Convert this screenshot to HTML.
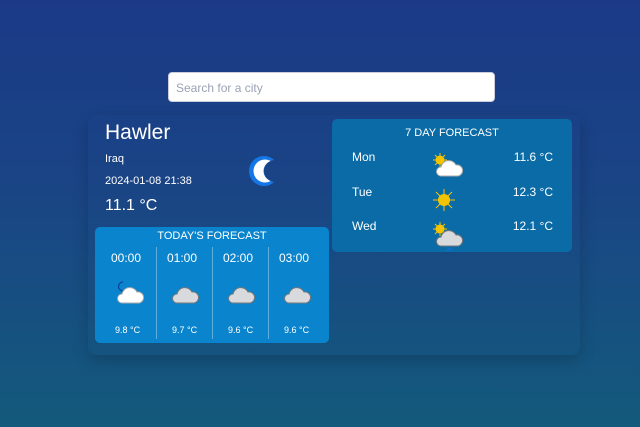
<!DOCTYPE html>
<html><head><meta charset="utf-8"><style>
*{margin:0;padding:0;box-sizing:border-box}
body{width:640px;height:427px;overflow:hidden;background:linear-gradient(180deg,#1b3987 0%,#1a4585 45%,#135a7c 100%);font-family:"Liberation Sans",sans-serif;color:#fff;position:relative}
.search{position:absolute;left:168px;top:72px;width:327px;height:30px;background:#fff;border-radius:4px;border:1px solid #ccd;font-size:12px;color:#9aa3b5;padding:8px 7px}
.card{position:absolute;left:88px;top:115px;width:492px;height:240px;border-radius:8px;box-shadow:0 6px 16px rgba(0,0,0,.18)}
.abs{position:absolute}
.today{position:absolute;left:95px;top:227px;width:234px;height:116px;background:#0a84cc;border-radius:5px}
.week{position:absolute;left:332px;top:119px;width:240px;height:133px;background:#0a6ba6;border-radius:5px}
.col{position:absolute;top:20px;width:1px;height:92px;background:rgba(255,255,255,.35)}
.t{font-size:12px}
</style></head><body>
<div class="search">Search for a city</div>
<div class="card"></div>
<div class="abs" style="left:105px;top:121px;font-size:21px">Hawler</div>
<div class="abs" style="left:105px;top:153px;font-size:11px">Iraq</div>
<div class="abs" style="left:105px;top:175px;font-size:11px">2024-01-08 21:38</div>
<div class="abs" style="left:105px;top:197px;font-size:16px">11.1 °C</div>
<svg class="abs" style="left:248px;top:154px" width="32" height="36" viewBox="0 0 32 36">
<defs><mask id="m"><rect width="32" height="36" fill="#fff"/><circle cx="27" cy="17" r="11" fill="#000"/></mask>
<mask id="m2"><rect width="32" height="36" fill="#fff"/><circle cx="26" cy="17" r="10.5" fill="#000"/></mask></defs>
<circle cx="16" cy="17" r="15" fill="#1577e6" mask="url(#m)"/>
<circle cx="17" cy="17" r="11.5" fill="#fff" mask="url(#m2)"/>
</svg>
<div class="today">
<div class="abs" style="left:0;width:234px;text-align:center;top:3px;font-size:11px">TODAY'S FORECAST</div>
<div class="col" style="left:61px"></div><div class="col" style="left:117px"></div><div class="col" style="left:173px"></div>
<div class="abs t" style="left:16px;top:24px">00:00</div>
<div class="abs t" style="left:72px;top:24px">01:00</div>
<div class="abs t" style="left:128px;top:24px">02:00</div>
<div class="abs t" style="left:184px;top:24px">03:00</div>
<svg class="abs" style="left:20px;top:54px" width="32" height="24"><path d="M8 1 A4.5 4.5 0 1 0 8 10 A3.5 3.5 0 0 1 8 1Z" fill="#fff" stroke="#0a3fa0" stroke-width="1.2"/><path d="M7 22 a4.5 4.5 0 0 1 0-9 a8 8 0 0 1 15-2 a5.5 5.5 0 0 1 2 11Z" fill="#fff" stroke="#aaa"/></svg>
<svg class="abs" style="left:76px;top:56px" width="32" height="22"><path d="M6 20 a4.5 4.5 0 0 1 0-9 a8 8 0 0 1 15-2 a5.5 5.5 0 0 1 2 11Z" fill="#d8dadd" stroke="#777"/></svg>
<svg class="abs" style="left:132px;top:56px" width="32" height="22"><path d="M6 20 a4.5 4.5 0 0 1 0-9 a8 8 0 0 1 15-2 a5.5 5.5 0 0 1 2 11Z" fill="#d8dadd" stroke="#777"/></svg>
<svg class="abs" style="left:188px;top:56px" width="32" height="22"><path d="M6 20 a4.5 4.5 0 0 1 0-9 a8 8 0 0 1 15-2 a5.5 5.5 0 0 1 2 11Z" fill="#d8dadd" stroke="#777"/></svg>
<div class="abs" style="left:20px;top:98px;font-size:9px">9.8 °C</div>
<div class="abs" style="left:77px;top:98px;font-size:9px">9.7 °C</div>
<div class="abs" style="left:133px;top:98px;font-size:9px">9.6 °C</div>
<div class="abs" style="left:189px;top:98px;font-size:9px">9.6 °C</div>
</div>
<div class="week">
<div class="abs" style="left:0;width:240px;text-align:center;top:8px;font-size:11px">7 DAY FORECAST</div>
<div class="abs t" style="left:20px;top:31px">Mon</div>
<div class="abs t" style="left:20px;top:66px">Tue</div>
<div class="abs t" style="left:20px;top:100px">Wed</div>
<div class="abs t" style="right:19px;top:31px">11.6 °C</div>
<div class="abs t" style="right:19px;top:66px">12.3 °C</div>
<div class="abs t" style="right:19px;top:100px">12.1 °C</div>
<svg class="abs" style="left:100px;top:33px" width="32" height="26"><g stroke="#f5c400" stroke-width="1"><line x1="8" y1="1" x2="8" y2="15"/><line x1="1" y1="8" x2="15" y2="8"/><line x1="3" y1="3" x2="13" y2="13"/><line x1="13" y1="3" x2="3" y2="13"/></g><circle cx="8" cy="8" r="4.5" fill="#f5c400"/><path d="M9 24 a4.5 4.5 0 0 1 0-9 a8 8 0 0 1 15-2 a5.5 5.5 0 0 1 2 11Z" fill="#fff" stroke="#aaa"/></svg>
<svg class="abs" style="left:101px;top:70px" width="22" height="22"><g stroke="#f5c400" stroke-width="1"><line x1="11" y1="0" x2="11" y2="22"/><line x1="0" y1="11" x2="22" y2="11"/><line x1="3" y1="3" x2="19" y2="19"/><line x1="19" y1="3" x2="3" y2="19"/></g><circle cx="11" cy="11" r="6" fill="#f5c400"/></svg>
<svg class="abs" style="left:100px;top:102px" width="34" height="32"><g stroke="#f5c400" stroke-width="1"><line x1="8" y1="1" x2="8" y2="15"/><line x1="1" y1="8" x2="15" y2="8"/><line x1="3" y1="3" x2="13" y2="13"/><line x1="13" y1="3" x2="3" y2="13"/></g><circle cx="8" cy="8" r="4.5" fill="#f5c400"/><path d="M9 25 a4.5 4.5 0 0 1 0-9 a8 8 0 0 1 15-2 a5.5 5.5 0 0 1 2 11Z" fill="#d8dadd" stroke="#777"/><path d="M15 30 l2-3 M18 30 l2-3" stroke="#1a6fe0" stroke-width="1"/></svg>
</div>
</body></html>
